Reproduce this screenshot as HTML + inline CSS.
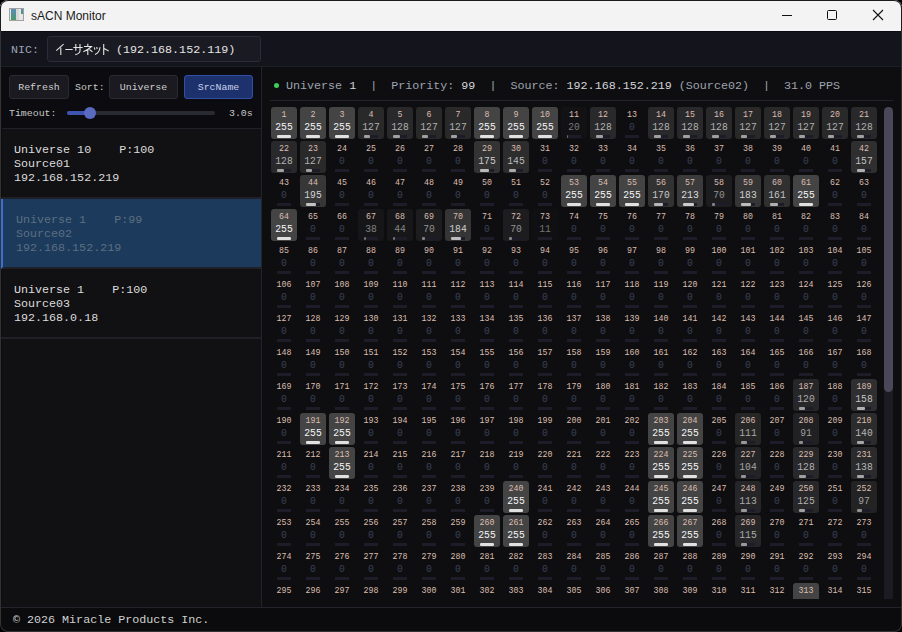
<!DOCTYPE html>
<html><head><meta charset="utf-8">
<style>
*{margin:0;padding:0;box-sizing:border-box}
html,body{width:902px;height:632px;overflow:hidden;background:#000}
body{font-family:"Liberation Mono",monospace;position:relative}
.win{position:absolute;left:0;top:0;width:902px;height:632px;border-radius:8px;overflow:hidden;background:#0e0e11}
.frame{position:absolute;left:0;top:0;width:902px;height:632px;border-radius:8px;border:1px solid #333;border-top-color:#1c1c1c;pointer-events:none}
.fl{position:absolute;top:6px;width:1px;height:25px;background:#1c1c1c}
.title{position:absolute;left:0;top:0;width:902px;height:31px;background:#f3f3f3;font-family:"Liberation Sans",sans-serif;font-size:12px;color:#1a1a1a}
.title .t{position:absolute;left:31px;top:9px}
.nic{position:absolute;left:0;top:31px;width:902px;height:36px;background:#14141c;border-top:1px solid #0a0a10;border-bottom:1px solid #1e1e27}
.nic .lbl{position:absolute;left:11px;top:11px;font-size:11.7px;color:#9aa3b5}
.nic .box{position:absolute;left:47px;top:4px;width:214px;height:26px;background:#1a1a22;border:1px solid #2c2c38;border-radius:3px}
.nic .nt{position:absolute;left:116px;top:11px;font-size:11.7px;color:#e6e6e6}
.left{position:absolute;left:0;top:67px;width:262px;height:540px;background:#111114;border-right:1px solid #23232b}
.btn{position:absolute;top:8px;height:24px;border:1px solid #2a2a33;background:#1a1a20;border-radius:3px;font-size:9.9px;color:#d0d0d0;text-align:center;line-height:23px}
.btn.sel{background:#1d326c;border-color:#3050a8;color:#c8d0ea}
.sort{position:absolute;left:75px;top:15px;font-size:9.9px;color:#c8c8c8}
.tmo{position:absolute;left:9px;top:41px;font-size:9.9px;color:#c8c8c8}
.track{position:absolute;left:67px;top:44px;width:148px;height:4px;border-radius:2px;background:#2a2a33}
.fill{position:absolute;left:67px;top:44px;width:24px;height:4px;border-radius:2px;background:#3d55b0}
.knob{position:absolute;left:84px;top:40px;width:12px;height:12px;border-radius:6px;background:#5a6ac0}
.tval{position:absolute;left:229px;top:41px;font-size:9.9px;color:#c8c8c8}
.sep1{position:absolute;left:0;top:61px;width:261px;height:1px;background:#202028}
.item{position:absolute;left:1px;width:260px;height:70px;font-size:11.7px;line-height:14px;color:#dcdcdc;border-bottom:2px solid #202029}
.item .tx{position:absolute;left:13px;top:14px;white-space:pre}
.item.sel{background:#1b3a5c;color:#5d6f80;border-left:2px solid #3b6fd8}
.item.sel .tx{left:13px}
.right{position:absolute;left:262px;top:67px;width:638px;height:540px;background:#0e0e11}
.status{position:absolute;left:8px;top:0;width:623px;height:34px;padding-left:16px;border-bottom:1px solid #23232b;font-size:11.7px;color:#9da3ad;white-space:pre;line-height:33px}
.status b{color:#d4d4d8;font-weight:normal}
.dot{position:absolute;left:4px;top:16px;width:5px;height:5px;border-radius:3px;background:#3ccf5a}
.grid{position:absolute;left:0;top:35px;width:622px;height:497px;overflow:hidden}
.c{position:absolute;width:26px;height:32px;border-radius:3px}
.c i{position:absolute;left:0;top:3px;width:26px;text-align:center;font-style:normal;font-size:9px;line-height:10px;color:#dcbeb0;transform:scaleX(.92)}
.c s{position:absolute;left:0;top:14px;width:26px;text-align:center;text-decoration:none;font-size:10.5px;line-height:12px;transform:scaleX(.92)}
.c s.b{}
.c u{position:absolute;left:6px;top:28px;width:14px;height:3px;background:#1c1d29}
.c u em{position:absolute;left:0;top:0;height:3px;display:block;border-radius:1px}
.sbt{position:absolute;left:622px;top:40px;width:9px;height:492px;background:#1c1b22;border-radius:4px 4px 0 0}
.sbth{position:absolute;left:622px;top:40px;width:9px;height:285px;background:#4a4858;border-radius:4.5px}
.foot{position:absolute;left:0;top:607px;width:902px;height:24px;background:#0b0b0d;border-top:1px solid #23232b;font-size:11.7px;color:#d0d0d0}
.foot span{position:absolute;left:13px;top:5px}
</style></head><body>
<div class="win">
 <div class="title">
  <svg style="position:absolute;left:9px;top:8px" width="15" height="13" viewBox="0 0 15 13"><defs><linearGradient id="g1" x1="0" y1="0" x2="0" y2="1"><stop offset="0" stop-color="#5a8cb8"/><stop offset="1" stop-color="#4a9a6a"/></linearGradient></defs><rect x="0.5" y="0.5" width="14" height="12" fill="#e6e6e6" stroke="#a0a0a0"/><rect x="2" y="1" width="5" height="11" fill="url(#g1)"/><rect x="7" y="1" width="3" height="11" fill="#d8d8d8"/><rect x="12" y="1" width="2" height="5" fill="url(#g1)"/></svg>
  <span class="t">sACN Monitor</span>
  <div style="position:absolute;left:782px;top:15px;width:10px;height:1px;background:#111"></div>
  <div style="position:absolute;left:827px;top:10px;width:10px;height:10px;border:1px solid #111;border-radius:1.5px"></div>
  <svg style="position:absolute;left:872px;top:9px" width="12" height="12" viewBox="0 0 12 12"><path d="M1 1L11 11M11 1L1 11" stroke="#111" stroke-width="1.1"/></svg>
 </div>
 <div class="nic"><span class="lbl">NIC:</span><div class="box"></div>
  <svg style="position:absolute;left:54px;top:9px" width="60" height="16" viewBox="54 41 60 16" fill="none" stroke="#e4e4e4" stroke-width="1.1" stroke-linecap="butt">
   <path d="M63.6 44.2L56.3 50.7M60.8 47.7V55"/>
   <path d="M65.3 49.5H72.7"/>
   <path d="M73.3 47.5H82.7M75.8 44V50.8M80 44V51Q79.6 53.8 75.3 54.6"/>
   <path d="M87.8 43.8V46.2M84 46.5H91.5Q88 50 83.3 51.7M87.8 49.3V55M89.5 49.5L92.5 51.9"/>
   <path d="M94.3 47.3L94.9 49.6M96.7 47L97.2 49.2M100 47.3Q99.5 52.5 95 54.6"/>
   <path d="M103.7 44V55M104 48.5L108.7 50.9"/>
  </svg>
  <span class="nt">(192.168.152.119)</span></div>
 <div class="left">
  <div style="position:absolute;left:0;top:0;width:261px;height:61px;background:#0c0c10"></div>
  <div class="btn" style="left:9px;width:60px">Refresh</div>
  <span class="sort">Sort:</span>
  <div class="btn" style="left:109px;width:69px">Universe</div>
  <div class="btn sel" style="left:184px;width:69px">SrcName</div>
  <span class="tmo">Timeout:</span>
  <div class="track"></div><div class="fill"></div><div class="knob"></div>
  <span class="tval">3.0s</span>
  <div class="sep1"></div>
  <div style="position:absolute;left:1px;top:0;width:1px;height:540px;background:#0c0c0d"></div>
  <div class="item" style="top:62px"><div class="tx">Universe 10    P:100
Source01
192.168.152.219</div></div>
  <div class="item sel" style="top:132px"><div class="tx">Universe 1    P:99
Source02
192.168.152.219</div></div>
  <div class="item" style="top:202px"><div class="tx">Universe 1    P:100
Source03
192.168.0.18</div></div>
 </div>
 <div class="right">
  <div class="status"><span class="dot"></span><span style="position:relative;top:3px">Universe <b>1</b>  |  Priority: <b>99</b>  |  Source: <b>192.168.152.219</b> (Source02)  |  31.0 PPS</span></div>
  <div class="grid">
<div class="c" style="left:9px;top:5px;background:#444444"><i>1</i><s class="v b" style="color:#f5f5f5">255</s><u><em style="width:14px;background:#e1e1e1"></em></u></div>
<div class="c" style="left:38px;top:5px;background:#444444"><i>2</i><s class="v b" style="color:#f5f5f5">255</s><u><em style="width:14px;background:#e1e1e1"></em></u></div>
<div class="c" style="left:67px;top:5px;background:#444444"><i>3</i><s class="v b" style="color:#f5f5f5">255</s><u><em style="width:14px;background:#e1e1e1"></em></u></div>
<div class="c" style="left:96px;top:5px;background:#29292a"><i>4</i><s class="v" style="color:#b1b1b1">127</s><u><em style="width:6px;background:#a0a0a0"></em></u></div>
<div class="c" style="left:125px;top:5px;background:#29292b"><i>5</i><s class="v" style="color:#b2b2b2">128</s><u><em style="width:7px;background:#a0a0a0"></em></u></div>
<div class="c" style="left:154px;top:5px;background:#29292a"><i>6</i><s class="v" style="color:#b1b1b1">127</s><u><em style="width:6px;background:#a0a0a0"></em></u></div>
<div class="c" style="left:183px;top:5px;background:#29292a"><i>7</i><s class="v" style="color:#b1b1b1">127</s><u><em style="width:6px;background:#a0a0a0"></em></u></div>
<div class="c" style="left:212px;top:5px;background:#444444"><i>8</i><s class="v b" style="color:#f5f5f5">255</s><u><em style="width:14px;background:#e1e1e1"></em></u></div>
<div class="c" style="left:241px;top:5px;background:#444444"><i>9</i><s class="v b" style="color:#f5f5f5">255</s><u><em style="width:14px;background:#e1e1e1"></em></u></div>
<div class="c" style="left:270px;top:5px;background:#444444"><i>10</i><s class="v b" style="color:#f5f5f5">255</s><u><em style="width:14px;background:#e1e1e1"></em></u></div>
<div class="c" style="left:299px;top:5px;background:#121215"><i>11</i><s class="v" style="color:#797979">20</s><u><em style="width:1px;background:#696969"></em></u></div>
<div class="c" style="left:328px;top:5px;background:#29292b"><i>12</i><s class="v" style="color:#b2b2b2">128</s><u><em style="width:7px;background:#a0a0a0"></em></u></div>
<div class="c" style="left:357px;top:5px"><i>13</i><s class="v" style="color:#3a4256">0</s><u><em style="width:0px;background:#5f5f5f"></em></u></div>
<div class="c" style="left:386px;top:5px;background:#29292b"><i>14</i><s class="v" style="color:#b2b2b2">128</s><u><em style="width:7px;background:#a0a0a0"></em></u></div>
<div class="c" style="left:415px;top:5px;background:#29292b"><i>15</i><s class="v" style="color:#b2b2b2">128</s><u><em style="width:7px;background:#a0a0a0"></em></u></div>
<div class="c" style="left:444px;top:5px;background:#29292b"><i>16</i><s class="v" style="color:#b2b2b2">128</s><u><em style="width:7px;background:#a0a0a0"></em></u></div>
<div class="c" style="left:473px;top:5px;background:#29292a"><i>17</i><s class="v" style="color:#b1b1b1">127</s><u><em style="width:6px;background:#a0a0a0"></em></u></div>
<div class="c" style="left:502px;top:5px;background:#29292a"><i>18</i><s class="v" style="color:#b1b1b1">127</s><u><em style="width:6px;background:#a0a0a0"></em></u></div>
<div class="c" style="left:531px;top:5px;background:#29292a"><i>19</i><s class="v" style="color:#b1b1b1">127</s><u><em style="width:6px;background:#a0a0a0"></em></u></div>
<div class="c" style="left:560px;top:5px;background:#29292a"><i>20</i><s class="v" style="color:#b1b1b1">127</s><u><em style="width:6px;background:#a0a0a0"></em></u></div>
<div class="c" style="left:589px;top:5px;background:#29292b"><i>21</i><s class="v" style="color:#b2b2b2">128</s><u><em style="width:7px;background:#a0a0a0"></em></u></div>
<div class="c" style="left:9px;top:39px;background:#29292b"><i>22</i><s class="v" style="color:#b2b2b2">128</s><u><em style="width:7px;background:#a0a0a0"></em></u></div>
<div class="c" style="left:38px;top:39px;background:#29292a"><i>23</i><s class="v" style="color:#b1b1b1">127</s><u><em style="width:6px;background:#a0a0a0"></em></u></div>
<div class="c" style="left:67px;top:39px"><i>24</i><s class="v" style="color:#3a4256">0</s><u><em style="width:0px;background:#5f5f5f"></em></u></div>
<div class="c" style="left:96px;top:39px"><i>25</i><s class="v" style="color:#3a4256">0</s><u><em style="width:0px;background:#5f5f5f"></em></u></div>
<div class="c" style="left:125px;top:39px"><i>26</i><s class="v" style="color:#3a4256">0</s><u><em style="width:0px;background:#5f5f5f"></em></u></div>
<div class="c" style="left:154px;top:39px"><i>27</i><s class="v" style="color:#3a4256">0</s><u><em style="width:0px;background:#5f5f5f"></em></u></div>
<div class="c" style="left:183px;top:39px"><i>28</i><s class="v" style="color:#3a4256">0</s><u><em style="width:0px;background:#5f5f5f"></em></u></div>
<div class="c" style="left:212px;top:39px;background:#333334"><i>29</i><s class="v" style="color:#cbcbcb">175</s><u><em style="width:9px;background:#b8b8b8"></em></u></div>
<div class="c" style="left:241px;top:39px;background:#2d2d2e"><i>30</i><s class="v" style="color:#bbbbbb">145</s><u><em style="width:7px;background:#a9a9a9"></em></u></div>
<div class="c" style="left:270px;top:39px"><i>31</i><s class="v" style="color:#3a4256">0</s><u><em style="width:0px;background:#5f5f5f"></em></u></div>
<div class="c" style="left:299px;top:39px"><i>32</i><s class="v" style="color:#3a4256">0</s><u><em style="width:0px;background:#5f5f5f"></em></u></div>
<div class="c" style="left:328px;top:39px"><i>33</i><s class="v" style="color:#3a4256">0</s><u><em style="width:0px;background:#5f5f5f"></em></u></div>
<div class="c" style="left:357px;top:39px"><i>34</i><s class="v" style="color:#3a4256">0</s><u><em style="width:0px;background:#5f5f5f"></em></u></div>
<div class="c" style="left:386px;top:39px"><i>35</i><s class="v" style="color:#3a4256">0</s><u><em style="width:0px;background:#5f5f5f"></em></u></div>
<div class="c" style="left:415px;top:39px"><i>36</i><s class="v" style="color:#3a4256">0</s><u><em style="width:0px;background:#5f5f5f"></em></u></div>
<div class="c" style="left:444px;top:39px"><i>37</i><s class="v" style="color:#3a4256">0</s><u><em style="width:0px;background:#5f5f5f"></em></u></div>
<div class="c" style="left:473px;top:39px"><i>38</i><s class="v" style="color:#3a4256">0</s><u><em style="width:0px;background:#5f5f5f"></em></u></div>
<div class="c" style="left:502px;top:39px"><i>39</i><s class="v" style="color:#3a4256">0</s><u><em style="width:0px;background:#5f5f5f"></em></u></div>
<div class="c" style="left:531px;top:39px"><i>40</i><s class="v" style="color:#3a4256">0</s><u><em style="width:0px;background:#5f5f5f"></em></u></div>
<div class="c" style="left:560px;top:39px"><i>41</i><s class="v" style="color:#3a4256">0</s><u><em style="width:0px;background:#5f5f5f"></em></u></div>
<div class="c" style="left:589px;top:39px;background:#2f2f30"><i>42</i><s class="v" style="color:#c1c1c1">157</s><u><em style="width:8px;background:#afafaf"></em></u></div>
<div class="c" style="left:9px;top:73px"><i>43</i><s class="v" style="color:#3a4256">0</s><u><em style="width:0px;background:#5f5f5f"></em></u></div>
<div class="c" style="left:38px;top:73px;background:#373738"><i>44</i><s class="v" style="color:#d5d5d5">195</s><u><em style="width:10px;background:#c2c2c2"></em></u></div>
<div class="c" style="left:67px;top:73px"><i>45</i><s class="v" style="color:#3a4256">0</s><u><em style="width:0px;background:#5f5f5f"></em></u></div>
<div class="c" style="left:96px;top:73px"><i>46</i><s class="v" style="color:#3a4256">0</s><u><em style="width:0px;background:#5f5f5f"></em></u></div>
<div class="c" style="left:125px;top:73px"><i>47</i><s class="v" style="color:#3a4256">0</s><u><em style="width:0px;background:#5f5f5f"></em></u></div>
<div class="c" style="left:154px;top:73px"><i>48</i><s class="v" style="color:#3a4256">0</s><u><em style="width:0px;background:#5f5f5f"></em></u></div>
<div class="c" style="left:183px;top:73px"><i>49</i><s class="v" style="color:#3a4256">0</s><u><em style="width:0px;background:#5f5f5f"></em></u></div>
<div class="c" style="left:212px;top:73px"><i>50</i><s class="v" style="color:#3a4256">0</s><u><em style="width:0px;background:#5f5f5f"></em></u></div>
<div class="c" style="left:241px;top:73px"><i>51</i><s class="v" style="color:#3a4256">0</s><u><em style="width:0px;background:#5f5f5f"></em></u></div>
<div class="c" style="left:270px;top:73px"><i>52</i><s class="v" style="color:#3a4256">0</s><u><em style="width:0px;background:#5f5f5f"></em></u></div>
<div class="c" style="left:299px;top:73px;background:#444444"><i>53</i><s class="v b" style="color:#f5f5f5">255</s><u><em style="width:14px;background:#e1e1e1"></em></u></div>
<div class="c" style="left:328px;top:73px;background:#444444"><i>54</i><s class="v b" style="color:#f5f5f5">255</s><u><em style="width:14px;background:#e1e1e1"></em></u></div>
<div class="c" style="left:357px;top:73px;background:#444444"><i>55</i><s class="v b" style="color:#f5f5f5">255</s><u><em style="width:14px;background:#e1e1e1"></em></u></div>
<div class="c" style="left:386px;top:73px;background:#323233"><i>56</i><s class="v" style="color:#c8c8c8">170</s><u><em style="width:9px;background:#b6b6b6"></em></u></div>
<div class="c" style="left:415px;top:73px;background:#3b3b3c"><i>57</i><s class="v" style="color:#dfdfdf">213</s><u><em style="width:11px;background:#cccccc"></em></u></div>
<div class="c" style="left:444px;top:73px;background:#1d1d1f"><i>58</i><s class="v" style="color:#939393">70</s><u><em style="width:3px;background:#838383"></em></u></div>
<div class="c" style="left:473px;top:73px;background:#353536"><i>59</i><s class="v" style="color:#cfcfcf">183</s><u><em style="width:10px;background:#bcbcbc"></em></u></div>
<div class="c" style="left:502px;top:73px;background:#303031"><i>60</i><s class="v" style="color:#c3c3c3">161</s><u><em style="width:8px;background:#b1b1b1"></em></u></div>
<div class="c" style="left:531px;top:73px;background:#444444"><i>61</i><s class="v b" style="color:#f5f5f5">255</s><u><em style="width:14px;background:#e1e1e1"></em></u></div>
<div class="c" style="left:560px;top:73px"><i>62</i><s class="v" style="color:#3a4256">0</s><u><em style="width:0px;background:#5f5f5f"></em></u></div>
<div class="c" style="left:589px;top:73px"><i>63</i><s class="v" style="color:#3a4256">0</s><u><em style="width:0px;background:#5f5f5f"></em></u></div>
<div class="c" style="left:9px;top:107px;background:#444444"><i>64</i><s class="v b" style="color:#f5f5f5">255</s><u><em style="width:14px;background:#e1e1e1"></em></u></div>
<div class="c" style="left:38px;top:107px"><i>65</i><s class="v" style="color:#3a4256">0</s><u><em style="width:0px;background:#5f5f5f"></em></u></div>
<div class="c" style="left:67px;top:107px"><i>66</i><s class="v" style="color:#3a4256">0</s><u><em style="width:0px;background:#5f5f5f"></em></u></div>
<div class="c" style="left:96px;top:107px;background:#161619"><i>67</i><s class="v" style="color:#828282">38</s><u><em style="width:2px;background:#727272"></em></u></div>
<div class="c" style="left:125px;top:107px;background:#17171a"><i>68</i><s class="v" style="color:#858585">44</s><u><em style="width:2px;background:#757575"></em></u></div>
<div class="c" style="left:154px;top:107px;background:#1d1d1f"><i>69</i><s class="v" style="color:#939393">70</s><u><em style="width:3px;background:#838383"></em></u></div>
<div class="c" style="left:183px;top:107px;background:#353536"><i>70</i><s class="v" style="color:#cfcfcf">184</s><u><em style="width:10px;background:#bdbdbd"></em></u></div>
<div class="c" style="left:212px;top:107px"><i>71</i><s class="v" style="color:#3a4256">0</s><u><em style="width:0px;background:#5f5f5f"></em></u></div>
<div class="c" style="left:241px;top:107px;background:#1d1d1f"><i>72</i><s class="v" style="color:#939393">70</s><u><em style="width:3px;background:#838383"></em></u></div>
<div class="c" style="left:270px;top:107px;background:#101013"><i>73</i><s class="v" style="color:#747474">11</s><u><em style="width:0px;background:#656565"></em></u></div>
<div class="c" style="left:299px;top:107px"><i>74</i><s class="v" style="color:#3a4256">0</s><u><em style="width:0px;background:#5f5f5f"></em></u></div>
<div class="c" style="left:328px;top:107px"><i>75</i><s class="v" style="color:#3a4256">0</s><u><em style="width:0px;background:#5f5f5f"></em></u></div>
<div class="c" style="left:357px;top:107px"><i>76</i><s class="v" style="color:#3a4256">0</s><u><em style="width:0px;background:#5f5f5f"></em></u></div>
<div class="c" style="left:386px;top:107px"><i>77</i><s class="v" style="color:#3a4256">0</s><u><em style="width:0px;background:#5f5f5f"></em></u></div>
<div class="c" style="left:415px;top:107px"><i>78</i><s class="v" style="color:#3a4256">0</s><u><em style="width:0px;background:#5f5f5f"></em></u></div>
<div class="c" style="left:444px;top:107px"><i>79</i><s class="v" style="color:#3a4256">0</s><u><em style="width:0px;background:#5f5f5f"></em></u></div>
<div class="c" style="left:473px;top:107px"><i>80</i><s class="v" style="color:#3a4256">0</s><u><em style="width:0px;background:#5f5f5f"></em></u></div>
<div class="c" style="left:502px;top:107px"><i>81</i><s class="v" style="color:#3a4256">0</s><u><em style="width:0px;background:#5f5f5f"></em></u></div>
<div class="c" style="left:531px;top:107px"><i>82</i><s class="v" style="color:#3a4256">0</s><u><em style="width:0px;background:#5f5f5f"></em></u></div>
<div class="c" style="left:560px;top:107px"><i>83</i><s class="v" style="color:#3a4256">0</s><u><em style="width:0px;background:#5f5f5f"></em></u></div>
<div class="c" style="left:589px;top:107px"><i>84</i><s class="v" style="color:#3a4256">0</s><u><em style="width:0px;background:#5f5f5f"></em></u></div>
<div class="c" style="left:9px;top:141px"><i>85</i><s class="v" style="color:#3a4256">0</s><u><em style="width:0px;background:#5f5f5f"></em></u></div>
<div class="c" style="left:38px;top:141px"><i>86</i><s class="v" style="color:#3a4256">0</s><u><em style="width:0px;background:#5f5f5f"></em></u></div>
<div class="c" style="left:67px;top:141px"><i>87</i><s class="v" style="color:#3a4256">0</s><u><em style="width:0px;background:#5f5f5f"></em></u></div>
<div class="c" style="left:96px;top:141px"><i>88</i><s class="v" style="color:#3a4256">0</s><u><em style="width:0px;background:#5f5f5f"></em></u></div>
<div class="c" style="left:125px;top:141px"><i>89</i><s class="v" style="color:#3a4256">0</s><u><em style="width:0px;background:#5f5f5f"></em></u></div>
<div class="c" style="left:154px;top:141px"><i>90</i><s class="v" style="color:#3a4256">0</s><u><em style="width:0px;background:#5f5f5f"></em></u></div>
<div class="c" style="left:183px;top:141px"><i>91</i><s class="v" style="color:#3a4256">0</s><u><em style="width:0px;background:#5f5f5f"></em></u></div>
<div class="c" style="left:212px;top:141px"><i>92</i><s class="v" style="color:#3a4256">0</s><u><em style="width:0px;background:#5f5f5f"></em></u></div>
<div class="c" style="left:241px;top:141px"><i>93</i><s class="v" style="color:#3a4256">0</s><u><em style="width:0px;background:#5f5f5f"></em></u></div>
<div class="c" style="left:270px;top:141px"><i>94</i><s class="v" style="color:#3a4256">0</s><u><em style="width:0px;background:#5f5f5f"></em></u></div>
<div class="c" style="left:299px;top:141px"><i>95</i><s class="v" style="color:#3a4256">0</s><u><em style="width:0px;background:#5f5f5f"></em></u></div>
<div class="c" style="left:328px;top:141px"><i>96</i><s class="v" style="color:#3a4256">0</s><u><em style="width:0px;background:#5f5f5f"></em></u></div>
<div class="c" style="left:357px;top:141px"><i>97</i><s class="v" style="color:#3a4256">0</s><u><em style="width:0px;background:#5f5f5f"></em></u></div>
<div class="c" style="left:386px;top:141px"><i>98</i><s class="v" style="color:#3a4256">0</s><u><em style="width:0px;background:#5f5f5f"></em></u></div>
<div class="c" style="left:415px;top:141px"><i>99</i><s class="v" style="color:#3a4256">0</s><u><em style="width:0px;background:#5f5f5f"></em></u></div>
<div class="c" style="left:444px;top:141px"><i>100</i><s class="v" style="color:#3a4256">0</s><u><em style="width:0px;background:#5f5f5f"></em></u></div>
<div class="c" style="left:473px;top:141px"><i>101</i><s class="v" style="color:#3a4256">0</s><u><em style="width:0px;background:#5f5f5f"></em></u></div>
<div class="c" style="left:502px;top:141px"><i>102</i><s class="v" style="color:#3a4256">0</s><u><em style="width:0px;background:#5f5f5f"></em></u></div>
<div class="c" style="left:531px;top:141px"><i>103</i><s class="v" style="color:#3a4256">0</s><u><em style="width:0px;background:#5f5f5f"></em></u></div>
<div class="c" style="left:560px;top:141px"><i>104</i><s class="v" style="color:#3a4256">0</s><u><em style="width:0px;background:#5f5f5f"></em></u></div>
<div class="c" style="left:589px;top:141px"><i>105</i><s class="v" style="color:#3a4256">0</s><u><em style="width:0px;background:#5f5f5f"></em></u></div>
<div class="c" style="left:9px;top:175px"><i>106</i><s class="v" style="color:#3a4256">0</s><u><em style="width:0px;background:#5f5f5f"></em></u></div>
<div class="c" style="left:38px;top:175px"><i>107</i><s class="v" style="color:#3a4256">0</s><u><em style="width:0px;background:#5f5f5f"></em></u></div>
<div class="c" style="left:67px;top:175px"><i>108</i><s class="v" style="color:#3a4256">0</s><u><em style="width:0px;background:#5f5f5f"></em></u></div>
<div class="c" style="left:96px;top:175px"><i>109</i><s class="v" style="color:#3a4256">0</s><u><em style="width:0px;background:#5f5f5f"></em></u></div>
<div class="c" style="left:125px;top:175px"><i>110</i><s class="v" style="color:#3a4256">0</s><u><em style="width:0px;background:#5f5f5f"></em></u></div>
<div class="c" style="left:154px;top:175px"><i>111</i><s class="v" style="color:#3a4256">0</s><u><em style="width:0px;background:#5f5f5f"></em></u></div>
<div class="c" style="left:183px;top:175px"><i>112</i><s class="v" style="color:#3a4256">0</s><u><em style="width:0px;background:#5f5f5f"></em></u></div>
<div class="c" style="left:212px;top:175px"><i>113</i><s class="v" style="color:#3a4256">0</s><u><em style="width:0px;background:#5f5f5f"></em></u></div>
<div class="c" style="left:241px;top:175px"><i>114</i><s class="v" style="color:#3a4256">0</s><u><em style="width:0px;background:#5f5f5f"></em></u></div>
<div class="c" style="left:270px;top:175px"><i>115</i><s class="v" style="color:#3a4256">0</s><u><em style="width:0px;background:#5f5f5f"></em></u></div>
<div class="c" style="left:299px;top:175px"><i>116</i><s class="v" style="color:#3a4256">0</s><u><em style="width:0px;background:#5f5f5f"></em></u></div>
<div class="c" style="left:328px;top:175px"><i>117</i><s class="v" style="color:#3a4256">0</s><u><em style="width:0px;background:#5f5f5f"></em></u></div>
<div class="c" style="left:357px;top:175px"><i>118</i><s class="v" style="color:#3a4256">0</s><u><em style="width:0px;background:#5f5f5f"></em></u></div>
<div class="c" style="left:386px;top:175px"><i>119</i><s class="v" style="color:#3a4256">0</s><u><em style="width:0px;background:#5f5f5f"></em></u></div>
<div class="c" style="left:415px;top:175px"><i>120</i><s class="v" style="color:#3a4256">0</s><u><em style="width:0px;background:#5f5f5f"></em></u></div>
<div class="c" style="left:444px;top:175px"><i>121</i><s class="v" style="color:#3a4256">0</s><u><em style="width:0px;background:#5f5f5f"></em></u></div>
<div class="c" style="left:473px;top:175px"><i>122</i><s class="v" style="color:#3a4256">0</s><u><em style="width:0px;background:#5f5f5f"></em></u></div>
<div class="c" style="left:502px;top:175px"><i>123</i><s class="v" style="color:#3a4256">0</s><u><em style="width:0px;background:#5f5f5f"></em></u></div>
<div class="c" style="left:531px;top:175px"><i>124</i><s class="v" style="color:#3a4256">0</s><u><em style="width:0px;background:#5f5f5f"></em></u></div>
<div class="c" style="left:560px;top:175px"><i>125</i><s class="v" style="color:#3a4256">0</s><u><em style="width:0px;background:#5f5f5f"></em></u></div>
<div class="c" style="left:589px;top:175px"><i>126</i><s class="v" style="color:#3a4256">0</s><u><em style="width:0px;background:#5f5f5f"></em></u></div>
<div class="c" style="left:9px;top:209px"><i>127</i><s class="v" style="color:#3a4256">0</s><u><em style="width:0px;background:#5f5f5f"></em></u></div>
<div class="c" style="left:38px;top:209px"><i>128</i><s class="v" style="color:#3a4256">0</s><u><em style="width:0px;background:#5f5f5f"></em></u></div>
<div class="c" style="left:67px;top:209px"><i>129</i><s class="v" style="color:#3a4256">0</s><u><em style="width:0px;background:#5f5f5f"></em></u></div>
<div class="c" style="left:96px;top:209px"><i>130</i><s class="v" style="color:#3a4256">0</s><u><em style="width:0px;background:#5f5f5f"></em></u></div>
<div class="c" style="left:125px;top:209px"><i>131</i><s class="v" style="color:#3a4256">0</s><u><em style="width:0px;background:#5f5f5f"></em></u></div>
<div class="c" style="left:154px;top:209px"><i>132</i><s class="v" style="color:#3a4256">0</s><u><em style="width:0px;background:#5f5f5f"></em></u></div>
<div class="c" style="left:183px;top:209px"><i>133</i><s class="v" style="color:#3a4256">0</s><u><em style="width:0px;background:#5f5f5f"></em></u></div>
<div class="c" style="left:212px;top:209px"><i>134</i><s class="v" style="color:#3a4256">0</s><u><em style="width:0px;background:#5f5f5f"></em></u></div>
<div class="c" style="left:241px;top:209px"><i>135</i><s class="v" style="color:#3a4256">0</s><u><em style="width:0px;background:#5f5f5f"></em></u></div>
<div class="c" style="left:270px;top:209px"><i>136</i><s class="v" style="color:#3a4256">0</s><u><em style="width:0px;background:#5f5f5f"></em></u></div>
<div class="c" style="left:299px;top:209px"><i>137</i><s class="v" style="color:#3a4256">0</s><u><em style="width:0px;background:#5f5f5f"></em></u></div>
<div class="c" style="left:328px;top:209px"><i>138</i><s class="v" style="color:#3a4256">0</s><u><em style="width:0px;background:#5f5f5f"></em></u></div>
<div class="c" style="left:357px;top:209px"><i>139</i><s class="v" style="color:#3a4256">0</s><u><em style="width:0px;background:#5f5f5f"></em></u></div>
<div class="c" style="left:386px;top:209px"><i>140</i><s class="v" style="color:#3a4256">0</s><u><em style="width:0px;background:#5f5f5f"></em></u></div>
<div class="c" style="left:415px;top:209px"><i>141</i><s class="v" style="color:#3a4256">0</s><u><em style="width:0px;background:#5f5f5f"></em></u></div>
<div class="c" style="left:444px;top:209px"><i>142</i><s class="v" style="color:#3a4256">0</s><u><em style="width:0px;background:#5f5f5f"></em></u></div>
<div class="c" style="left:473px;top:209px"><i>143</i><s class="v" style="color:#3a4256">0</s><u><em style="width:0px;background:#5f5f5f"></em></u></div>
<div class="c" style="left:502px;top:209px"><i>144</i><s class="v" style="color:#3a4256">0</s><u><em style="width:0px;background:#5f5f5f"></em></u></div>
<div class="c" style="left:531px;top:209px"><i>145</i><s class="v" style="color:#3a4256">0</s><u><em style="width:0px;background:#5f5f5f"></em></u></div>
<div class="c" style="left:560px;top:209px"><i>146</i><s class="v" style="color:#3a4256">0</s><u><em style="width:0px;background:#5f5f5f"></em></u></div>
<div class="c" style="left:589px;top:209px"><i>147</i><s class="v" style="color:#3a4256">0</s><u><em style="width:0px;background:#5f5f5f"></em></u></div>
<div class="c" style="left:9px;top:243px"><i>148</i><s class="v" style="color:#3a4256">0</s><u><em style="width:0px;background:#5f5f5f"></em></u></div>
<div class="c" style="left:38px;top:243px"><i>149</i><s class="v" style="color:#3a4256">0</s><u><em style="width:0px;background:#5f5f5f"></em></u></div>
<div class="c" style="left:67px;top:243px"><i>150</i><s class="v" style="color:#3a4256">0</s><u><em style="width:0px;background:#5f5f5f"></em></u></div>
<div class="c" style="left:96px;top:243px"><i>151</i><s class="v" style="color:#3a4256">0</s><u><em style="width:0px;background:#5f5f5f"></em></u></div>
<div class="c" style="left:125px;top:243px"><i>152</i><s class="v" style="color:#3a4256">0</s><u><em style="width:0px;background:#5f5f5f"></em></u></div>
<div class="c" style="left:154px;top:243px"><i>153</i><s class="v" style="color:#3a4256">0</s><u><em style="width:0px;background:#5f5f5f"></em></u></div>
<div class="c" style="left:183px;top:243px"><i>154</i><s class="v" style="color:#3a4256">0</s><u><em style="width:0px;background:#5f5f5f"></em></u></div>
<div class="c" style="left:212px;top:243px"><i>155</i><s class="v" style="color:#3a4256">0</s><u><em style="width:0px;background:#5f5f5f"></em></u></div>
<div class="c" style="left:241px;top:243px"><i>156</i><s class="v" style="color:#3a4256">0</s><u><em style="width:0px;background:#5f5f5f"></em></u></div>
<div class="c" style="left:270px;top:243px"><i>157</i><s class="v" style="color:#3a4256">0</s><u><em style="width:0px;background:#5f5f5f"></em></u></div>
<div class="c" style="left:299px;top:243px"><i>158</i><s class="v" style="color:#3a4256">0</s><u><em style="width:0px;background:#5f5f5f"></em></u></div>
<div class="c" style="left:328px;top:243px"><i>159</i><s class="v" style="color:#3a4256">0</s><u><em style="width:0px;background:#5f5f5f"></em></u></div>
<div class="c" style="left:357px;top:243px"><i>160</i><s class="v" style="color:#3a4256">0</s><u><em style="width:0px;background:#5f5f5f"></em></u></div>
<div class="c" style="left:386px;top:243px"><i>161</i><s class="v" style="color:#3a4256">0</s><u><em style="width:0px;background:#5f5f5f"></em></u></div>
<div class="c" style="left:415px;top:243px"><i>162</i><s class="v" style="color:#3a4256">0</s><u><em style="width:0px;background:#5f5f5f"></em></u></div>
<div class="c" style="left:444px;top:243px"><i>163</i><s class="v" style="color:#3a4256">0</s><u><em style="width:0px;background:#5f5f5f"></em></u></div>
<div class="c" style="left:473px;top:243px"><i>164</i><s class="v" style="color:#3a4256">0</s><u><em style="width:0px;background:#5f5f5f"></em></u></div>
<div class="c" style="left:502px;top:243px"><i>165</i><s class="v" style="color:#3a4256">0</s><u><em style="width:0px;background:#5f5f5f"></em></u></div>
<div class="c" style="left:531px;top:243px"><i>166</i><s class="v" style="color:#3a4256">0</s><u><em style="width:0px;background:#5f5f5f"></em></u></div>
<div class="c" style="left:560px;top:243px"><i>167</i><s class="v" style="color:#3a4256">0</s><u><em style="width:0px;background:#5f5f5f"></em></u></div>
<div class="c" style="left:589px;top:243px"><i>168</i><s class="v" style="color:#3a4256">0</s><u><em style="width:0px;background:#5f5f5f"></em></u></div>
<div class="c" style="left:9px;top:277px"><i>169</i><s class="v" style="color:#3a4256">0</s><u><em style="width:0px;background:#5f5f5f"></em></u></div>
<div class="c" style="left:38px;top:277px"><i>170</i><s class="v" style="color:#3a4256">0</s><u><em style="width:0px;background:#5f5f5f"></em></u></div>
<div class="c" style="left:67px;top:277px"><i>171</i><s class="v" style="color:#3a4256">0</s><u><em style="width:0px;background:#5f5f5f"></em></u></div>
<div class="c" style="left:96px;top:277px"><i>172</i><s class="v" style="color:#3a4256">0</s><u><em style="width:0px;background:#5f5f5f"></em></u></div>
<div class="c" style="left:125px;top:277px"><i>173</i><s class="v" style="color:#3a4256">0</s><u><em style="width:0px;background:#5f5f5f"></em></u></div>
<div class="c" style="left:154px;top:277px"><i>174</i><s class="v" style="color:#3a4256">0</s><u><em style="width:0px;background:#5f5f5f"></em></u></div>
<div class="c" style="left:183px;top:277px"><i>175</i><s class="v" style="color:#3a4256">0</s><u><em style="width:0px;background:#5f5f5f"></em></u></div>
<div class="c" style="left:212px;top:277px"><i>176</i><s class="v" style="color:#3a4256">0</s><u><em style="width:0px;background:#5f5f5f"></em></u></div>
<div class="c" style="left:241px;top:277px"><i>177</i><s class="v" style="color:#3a4256">0</s><u><em style="width:0px;background:#5f5f5f"></em></u></div>
<div class="c" style="left:270px;top:277px"><i>178</i><s class="v" style="color:#3a4256">0</s><u><em style="width:0px;background:#5f5f5f"></em></u></div>
<div class="c" style="left:299px;top:277px"><i>179</i><s class="v" style="color:#3a4256">0</s><u><em style="width:0px;background:#5f5f5f"></em></u></div>
<div class="c" style="left:328px;top:277px"><i>180</i><s class="v" style="color:#3a4256">0</s><u><em style="width:0px;background:#5f5f5f"></em></u></div>
<div class="c" style="left:357px;top:277px"><i>181</i><s class="v" style="color:#3a4256">0</s><u><em style="width:0px;background:#5f5f5f"></em></u></div>
<div class="c" style="left:386px;top:277px"><i>182</i><s class="v" style="color:#3a4256">0</s><u><em style="width:0px;background:#5f5f5f"></em></u></div>
<div class="c" style="left:415px;top:277px"><i>183</i><s class="v" style="color:#3a4256">0</s><u><em style="width:0px;background:#5f5f5f"></em></u></div>
<div class="c" style="left:444px;top:277px"><i>184</i><s class="v" style="color:#3a4256">0</s><u><em style="width:0px;background:#5f5f5f"></em></u></div>
<div class="c" style="left:473px;top:277px"><i>185</i><s class="v" style="color:#3a4256">0</s><u><em style="width:0px;background:#5f5f5f"></em></u></div>
<div class="c" style="left:502px;top:277px"><i>186</i><s class="v" style="color:#3a4256">0</s><u><em style="width:0px;background:#5f5f5f"></em></u></div>
<div class="c" style="left:531px;top:277px;background:#272729"><i>187</i><s class="v" style="color:#aeaeae">120</s><u><em style="width:6px;background:#9c9c9c"></em></u></div>
<div class="c" style="left:560px;top:277px"><i>188</i><s class="v" style="color:#3a4256">0</s><u><em style="width:0px;background:#5f5f5f"></em></u></div>
<div class="c" style="left:589px;top:277px;background:#2f2f31"><i>189</i><s class="v" style="color:#c2c2c2">158</s><u><em style="width:8px;background:#b0b0b0"></em></u></div>
<div class="c" style="left:9px;top:311px"><i>190</i><s class="v" style="color:#3a4256">0</s><u><em style="width:0px;background:#5f5f5f"></em></u></div>
<div class="c" style="left:38px;top:311px;background:#444444"><i>191</i><s class="v b" style="color:#f5f5f5">255</s><u><em style="width:14px;background:#e1e1e1"></em></u></div>
<div class="c" style="left:67px;top:311px;background:#444444"><i>192</i><s class="v b" style="color:#f5f5f5">255</s><u><em style="width:14px;background:#e1e1e1"></em></u></div>
<div class="c" style="left:96px;top:311px"><i>193</i><s class="v" style="color:#3a4256">0</s><u><em style="width:0px;background:#5f5f5f"></em></u></div>
<div class="c" style="left:125px;top:311px"><i>194</i><s class="v" style="color:#3a4256">0</s><u><em style="width:0px;background:#5f5f5f"></em></u></div>
<div class="c" style="left:154px;top:311px"><i>195</i><s class="v" style="color:#3a4256">0</s><u><em style="width:0px;background:#5f5f5f"></em></u></div>
<div class="c" style="left:183px;top:311px"><i>196</i><s class="v" style="color:#3a4256">0</s><u><em style="width:0px;background:#5f5f5f"></em></u></div>
<div class="c" style="left:212px;top:311px"><i>197</i><s class="v" style="color:#3a4256">0</s><u><em style="width:0px;background:#5f5f5f"></em></u></div>
<div class="c" style="left:241px;top:311px"><i>198</i><s class="v" style="color:#3a4256">0</s><u><em style="width:0px;background:#5f5f5f"></em></u></div>
<div class="c" style="left:270px;top:311px"><i>199</i><s class="v" style="color:#3a4256">0</s><u><em style="width:0px;background:#5f5f5f"></em></u></div>
<div class="c" style="left:299px;top:311px"><i>200</i><s class="v" style="color:#3a4256">0</s><u><em style="width:0px;background:#5f5f5f"></em></u></div>
<div class="c" style="left:328px;top:311px"><i>201</i><s class="v" style="color:#3a4256">0</s><u><em style="width:0px;background:#5f5f5f"></em></u></div>
<div class="c" style="left:357px;top:311px"><i>202</i><s class="v" style="color:#3a4256">0</s><u><em style="width:0px;background:#5f5f5f"></em></u></div>
<div class="c" style="left:386px;top:311px;background:#444444"><i>203</i><s class="v b" style="color:#f5f5f5">255</s><u><em style="width:14px;background:#e1e1e1"></em></u></div>
<div class="c" style="left:415px;top:311px;background:#444444"><i>204</i><s class="v b" style="color:#f5f5f5">255</s><u><em style="width:14px;background:#e1e1e1"></em></u></div>
<div class="c" style="left:444px;top:311px"><i>205</i><s class="v" style="color:#3a4256">0</s><u><em style="width:0px;background:#5f5f5f"></em></u></div>
<div class="c" style="left:473px;top:311px;background:#262627"><i>206</i><s class="v" style="color:#a9a9a9">111</s><u><em style="width:6px;background:#989898"></em></u></div>
<div class="c" style="left:502px;top:311px"><i>207</i><s class="v" style="color:#3a4256">0</s><u><em style="width:0px;background:#5f5f5f"></em></u></div>
<div class="c" style="left:531px;top:311px;background:#212123"><i>208</i><s class="v" style="color:#9e9e9e">91</s><u><em style="width:4px;background:#8d8d8d"></em></u></div>
<div class="c" style="left:560px;top:311px"><i>209</i><s class="v" style="color:#3a4256">0</s><u><em style="width:0px;background:#5f5f5f"></em></u></div>
<div class="c" style="left:589px;top:311px;background:#2c2c2d"><i>210</i><s class="v" style="color:#b8b8b8">140</s><u><em style="width:7px;background:#a6a6a6"></em></u></div>
<div class="c" style="left:9px;top:345px"><i>211</i><s class="v" style="color:#3a4256">0</s><u><em style="width:0px;background:#5f5f5f"></em></u></div>
<div class="c" style="left:38px;top:345px"><i>212</i><s class="v" style="color:#3a4256">0</s><u><em style="width:0px;background:#5f5f5f"></em></u></div>
<div class="c" style="left:67px;top:345px;background:#444444"><i>213</i><s class="v b" style="color:#f5f5f5">255</s><u><em style="width:14px;background:#e1e1e1"></em></u></div>
<div class="c" style="left:96px;top:345px"><i>214</i><s class="v" style="color:#3a4256">0</s><u><em style="width:0px;background:#5f5f5f"></em></u></div>
<div class="c" style="left:125px;top:345px"><i>215</i><s class="v" style="color:#3a4256">0</s><u><em style="width:0px;background:#5f5f5f"></em></u></div>
<div class="c" style="left:154px;top:345px"><i>216</i><s class="v" style="color:#3a4256">0</s><u><em style="width:0px;background:#5f5f5f"></em></u></div>
<div class="c" style="left:183px;top:345px"><i>217</i><s class="v" style="color:#3a4256">0</s><u><em style="width:0px;background:#5f5f5f"></em></u></div>
<div class="c" style="left:212px;top:345px"><i>218</i><s class="v" style="color:#3a4256">0</s><u><em style="width:0px;background:#5f5f5f"></em></u></div>
<div class="c" style="left:241px;top:345px"><i>219</i><s class="v" style="color:#3a4256">0</s><u><em style="width:0px;background:#5f5f5f"></em></u></div>
<div class="c" style="left:270px;top:345px"><i>220</i><s class="v" style="color:#3a4256">0</s><u><em style="width:0px;background:#5f5f5f"></em></u></div>
<div class="c" style="left:299px;top:345px"><i>221</i><s class="v" style="color:#3a4256">0</s><u><em style="width:0px;background:#5f5f5f"></em></u></div>
<div class="c" style="left:328px;top:345px"><i>222</i><s class="v" style="color:#3a4256">0</s><u><em style="width:0px;background:#5f5f5f"></em></u></div>
<div class="c" style="left:357px;top:345px"><i>223</i><s class="v" style="color:#3a4256">0</s><u><em style="width:0px;background:#5f5f5f"></em></u></div>
<div class="c" style="left:386px;top:345px;background:#444444"><i>224</i><s class="v b" style="color:#f5f5f5">255</s><u><em style="width:14px;background:#e1e1e1"></em></u></div>
<div class="c" style="left:415px;top:345px;background:#444444"><i>225</i><s class="v b" style="color:#f5f5f5">255</s><u><em style="width:14px;background:#e1e1e1"></em></u></div>
<div class="c" style="left:444px;top:345px"><i>226</i><s class="v" style="color:#3a4256">0</s><u><em style="width:0px;background:#5f5f5f"></em></u></div>
<div class="c" style="left:473px;top:345px;background:#242426"><i>227</i><s class="v" style="color:#a5a5a5">104</s><u><em style="width:5px;background:#949494"></em></u></div>
<div class="c" style="left:502px;top:345px"><i>228</i><s class="v" style="color:#3a4256">0</s><u><em style="width:0px;background:#5f5f5f"></em></u></div>
<div class="c" style="left:531px;top:345px;background:#29292b"><i>229</i><s class="v" style="color:#b2b2b2">128</s><u><em style="width:7px;background:#a0a0a0"></em></u></div>
<div class="c" style="left:560px;top:345px"><i>230</i><s class="v" style="color:#3a4256">0</s><u><em style="width:0px;background:#5f5f5f"></em></u></div>
<div class="c" style="left:589px;top:345px;background:#2b2b2d"><i>231</i><s class="v" style="color:#b7b7b7">138</s><u><em style="width:7px;background:#a5a5a5"></em></u></div>
<div class="c" style="left:9px;top:379px"><i>232</i><s class="v" style="color:#3a4256">0</s><u><em style="width:0px;background:#5f5f5f"></em></u></div>
<div class="c" style="left:38px;top:379px"><i>233</i><s class="v" style="color:#3a4256">0</s><u><em style="width:0px;background:#5f5f5f"></em></u></div>
<div class="c" style="left:67px;top:379px"><i>234</i><s class="v" style="color:#3a4256">0</s><u><em style="width:0px;background:#5f5f5f"></em></u></div>
<div class="c" style="left:96px;top:379px"><i>235</i><s class="v" style="color:#3a4256">0</s><u><em style="width:0px;background:#5f5f5f"></em></u></div>
<div class="c" style="left:125px;top:379px"><i>236</i><s class="v" style="color:#3a4256">0</s><u><em style="width:0px;background:#5f5f5f"></em></u></div>
<div class="c" style="left:154px;top:379px"><i>237</i><s class="v" style="color:#3a4256">0</s><u><em style="width:0px;background:#5f5f5f"></em></u></div>
<div class="c" style="left:183px;top:379px"><i>238</i><s class="v" style="color:#3a4256">0</s><u><em style="width:0px;background:#5f5f5f"></em></u></div>
<div class="c" style="left:212px;top:379px"><i>239</i><s class="v" style="color:#3a4256">0</s><u><em style="width:0px;background:#5f5f5f"></em></u></div>
<div class="c" style="left:241px;top:379px;background:#444444"><i>240</i><s class="v b" style="color:#f5f5f5">255</s><u><em style="width:14px;background:#e1e1e1"></em></u></div>
<div class="c" style="left:270px;top:379px"><i>241</i><s class="v" style="color:#3a4256">0</s><u><em style="width:0px;background:#5f5f5f"></em></u></div>
<div class="c" style="left:299px;top:379px"><i>242</i><s class="v" style="color:#3a4256">0</s><u><em style="width:0px;background:#5f5f5f"></em></u></div>
<div class="c" style="left:328px;top:379px"><i>243</i><s class="v" style="color:#3a4256">0</s><u><em style="width:0px;background:#5f5f5f"></em></u></div>
<div class="c" style="left:357px;top:379px"><i>244</i><s class="v" style="color:#3a4256">0</s><u><em style="width:0px;background:#5f5f5f"></em></u></div>
<div class="c" style="left:386px;top:379px;background:#444444"><i>245</i><s class="v b" style="color:#f5f5f5">255</s><u><em style="width:14px;background:#e1e1e1"></em></u></div>
<div class="c" style="left:415px;top:379px;background:#444444"><i>246</i><s class="v b" style="color:#f5f5f5">255</s><u><em style="width:14px;background:#e1e1e1"></em></u></div>
<div class="c" style="left:444px;top:379px"><i>247</i><s class="v" style="color:#3a4256">0</s><u><em style="width:0px;background:#5f5f5f"></em></u></div>
<div class="c" style="left:473px;top:379px;background:#262628"><i>248</i><s class="v" style="color:#aaaaaa">113</s><u><em style="width:6px;background:#999999"></em></u></div>
<div class="c" style="left:502px;top:379px"><i>249</i><s class="v" style="color:#3a4256">0</s><u><em style="width:0px;background:#5f5f5f"></em></u></div>
<div class="c" style="left:531px;top:379px;background:#28282a"><i>250</i><s class="v" style="color:#b0b0b0">125</s><u><em style="width:6px;background:#9f9f9f"></em></u></div>
<div class="c" style="left:560px;top:379px"><i>251</i><s class="v" style="color:#3a4256">0</s><u><em style="width:0px;background:#5f5f5f"></em></u></div>
<div class="c" style="left:589px;top:379px;background:#232324"><i>252</i><s class="v" style="color:#a1a1a1">97</s><u><em style="width:5px;background:#909090"></em></u></div>
<div class="c" style="left:9px;top:413px"><i>253</i><s class="v" style="color:#3a4256">0</s><u><em style="width:0px;background:#5f5f5f"></em></u></div>
<div class="c" style="left:38px;top:413px"><i>254</i><s class="v" style="color:#3a4256">0</s><u><em style="width:0px;background:#5f5f5f"></em></u></div>
<div class="c" style="left:67px;top:413px"><i>255</i><s class="v" style="color:#3a4256">0</s><u><em style="width:0px;background:#5f5f5f"></em></u></div>
<div class="c" style="left:96px;top:413px"><i>256</i><s class="v" style="color:#3a4256">0</s><u><em style="width:0px;background:#5f5f5f"></em></u></div>
<div class="c" style="left:125px;top:413px"><i>257</i><s class="v" style="color:#3a4256">0</s><u><em style="width:0px;background:#5f5f5f"></em></u></div>
<div class="c" style="left:154px;top:413px"><i>258</i><s class="v" style="color:#3a4256">0</s><u><em style="width:0px;background:#5f5f5f"></em></u></div>
<div class="c" style="left:183px;top:413px"><i>259</i><s class="v" style="color:#3a4256">0</s><u><em style="width:0px;background:#5f5f5f"></em></u></div>
<div class="c" style="left:212px;top:413px;background:#444444"><i>260</i><s class="v b" style="color:#f5f5f5">255</s><u><em style="width:14px;background:#e1e1e1"></em></u></div>
<div class="c" style="left:241px;top:413px;background:#444444"><i>261</i><s class="v b" style="color:#f5f5f5">255</s><u><em style="width:14px;background:#e1e1e1"></em></u></div>
<div class="c" style="left:270px;top:413px"><i>262</i><s class="v" style="color:#3a4256">0</s><u><em style="width:0px;background:#5f5f5f"></em></u></div>
<div class="c" style="left:299px;top:413px"><i>263</i><s class="v" style="color:#3a4256">0</s><u><em style="width:0px;background:#5f5f5f"></em></u></div>
<div class="c" style="left:328px;top:413px"><i>264</i><s class="v" style="color:#3a4256">0</s><u><em style="width:0px;background:#5f5f5f"></em></u></div>
<div class="c" style="left:357px;top:413px"><i>265</i><s class="v" style="color:#3a4256">0</s><u><em style="width:0px;background:#5f5f5f"></em></u></div>
<div class="c" style="left:386px;top:413px;background:#444444"><i>266</i><s class="v b" style="color:#f5f5f5">255</s><u><em style="width:14px;background:#e1e1e1"></em></u></div>
<div class="c" style="left:415px;top:413px;background:#444444"><i>267</i><s class="v b" style="color:#f5f5f5">255</s><u><em style="width:14px;background:#e1e1e1"></em></u></div>
<div class="c" style="left:444px;top:413px"><i>268</i><s class="v" style="color:#3a4256">0</s><u><em style="width:0px;background:#5f5f5f"></em></u></div>
<div class="c" style="left:473px;top:413px;background:#262628"><i>269</i><s class="v" style="color:#ababab">115</s><u><em style="width:6px;background:#9a9a9a"></em></u></div>
<div class="c" style="left:502px;top:413px"><i>270</i><s class="v" style="color:#3a4256">0</s><u><em style="width:0px;background:#5f5f5f"></em></u></div>
<div class="c" style="left:531px;top:413px"><i>271</i><s class="v" style="color:#3a4256">0</s><u><em style="width:0px;background:#5f5f5f"></em></u></div>
<div class="c" style="left:560px;top:413px"><i>272</i><s class="v" style="color:#3a4256">0</s><u><em style="width:0px;background:#5f5f5f"></em></u></div>
<div class="c" style="left:589px;top:413px"><i>273</i><s class="v" style="color:#3a4256">0</s><u><em style="width:0px;background:#5f5f5f"></em></u></div>
<div class="c" style="left:9px;top:447px"><i>274</i><s class="v" style="color:#3a4256">0</s><u><em style="width:0px;background:#5f5f5f"></em></u></div>
<div class="c" style="left:38px;top:447px"><i>275</i><s class="v" style="color:#3a4256">0</s><u><em style="width:0px;background:#5f5f5f"></em></u></div>
<div class="c" style="left:67px;top:447px"><i>276</i><s class="v" style="color:#3a4256">0</s><u><em style="width:0px;background:#5f5f5f"></em></u></div>
<div class="c" style="left:96px;top:447px"><i>277</i><s class="v" style="color:#3a4256">0</s><u><em style="width:0px;background:#5f5f5f"></em></u></div>
<div class="c" style="left:125px;top:447px"><i>278</i><s class="v" style="color:#3a4256">0</s><u><em style="width:0px;background:#5f5f5f"></em></u></div>
<div class="c" style="left:154px;top:447px"><i>279</i><s class="v" style="color:#3a4256">0</s><u><em style="width:0px;background:#5f5f5f"></em></u></div>
<div class="c" style="left:183px;top:447px"><i>280</i><s class="v" style="color:#3a4256">0</s><u><em style="width:0px;background:#5f5f5f"></em></u></div>
<div class="c" style="left:212px;top:447px"><i>281</i><s class="v" style="color:#3a4256">0</s><u><em style="width:0px;background:#5f5f5f"></em></u></div>
<div class="c" style="left:241px;top:447px"><i>282</i><s class="v" style="color:#3a4256">0</s><u><em style="width:0px;background:#5f5f5f"></em></u></div>
<div class="c" style="left:270px;top:447px"><i>283</i><s class="v" style="color:#3a4256">0</s><u><em style="width:0px;background:#5f5f5f"></em></u></div>
<div class="c" style="left:299px;top:447px"><i>284</i><s class="v" style="color:#3a4256">0</s><u><em style="width:0px;background:#5f5f5f"></em></u></div>
<div class="c" style="left:328px;top:447px"><i>285</i><s class="v" style="color:#3a4256">0</s><u><em style="width:0px;background:#5f5f5f"></em></u></div>
<div class="c" style="left:357px;top:447px"><i>286</i><s class="v" style="color:#3a4256">0</s><u><em style="width:0px;background:#5f5f5f"></em></u></div>
<div class="c" style="left:386px;top:447px"><i>287</i><s class="v" style="color:#3a4256">0</s><u><em style="width:0px;background:#5f5f5f"></em></u></div>
<div class="c" style="left:415px;top:447px"><i>288</i><s class="v" style="color:#3a4256">0</s><u><em style="width:0px;background:#5f5f5f"></em></u></div>
<div class="c" style="left:444px;top:447px"><i>289</i><s class="v" style="color:#3a4256">0</s><u><em style="width:0px;background:#5f5f5f"></em></u></div>
<div class="c" style="left:473px;top:447px"><i>290</i><s class="v" style="color:#3a4256">0</s><u><em style="width:0px;background:#5f5f5f"></em></u></div>
<div class="c" style="left:502px;top:447px"><i>291</i><s class="v" style="color:#3a4256">0</s><u><em style="width:0px;background:#5f5f5f"></em></u></div>
<div class="c" style="left:531px;top:447px"><i>292</i><s class="v" style="color:#3a4256">0</s><u><em style="width:0px;background:#5f5f5f"></em></u></div>
<div class="c" style="left:560px;top:447px"><i>293</i><s class="v" style="color:#3a4256">0</s><u><em style="width:0px;background:#5f5f5f"></em></u></div>
<div class="c" style="left:589px;top:447px"><i>294</i><s class="v" style="color:#3a4256">0</s><u><em style="width:0px;background:#5f5f5f"></em></u></div>
<div class="c" style="left:9px;top:481px"><i>295</i><s class="v" style="color:#3a4256">0</s><u><em style="width:0px;background:#5f5f5f"></em></u></div>
<div class="c" style="left:38px;top:481px"><i>296</i><s class="v" style="color:#3a4256">0</s><u><em style="width:0px;background:#5f5f5f"></em></u></div>
<div class="c" style="left:67px;top:481px"><i>297</i><s class="v" style="color:#3a4256">0</s><u><em style="width:0px;background:#5f5f5f"></em></u></div>
<div class="c" style="left:96px;top:481px"><i>298</i><s class="v" style="color:#3a4256">0</s><u><em style="width:0px;background:#5f5f5f"></em></u></div>
<div class="c" style="left:125px;top:481px"><i>299</i><s class="v" style="color:#3a4256">0</s><u><em style="width:0px;background:#5f5f5f"></em></u></div>
<div class="c" style="left:154px;top:481px"><i>300</i><s class="v" style="color:#3a4256">0</s><u><em style="width:0px;background:#5f5f5f"></em></u></div>
<div class="c" style="left:183px;top:481px"><i>301</i><s class="v" style="color:#3a4256">0</s><u><em style="width:0px;background:#5f5f5f"></em></u></div>
<div class="c" style="left:212px;top:481px"><i>302</i><s class="v" style="color:#3a4256">0</s><u><em style="width:0px;background:#5f5f5f"></em></u></div>
<div class="c" style="left:241px;top:481px"><i>303</i><s class="v" style="color:#3a4256">0</s><u><em style="width:0px;background:#5f5f5f"></em></u></div>
<div class="c" style="left:270px;top:481px"><i>304</i><s class="v" style="color:#3a4256">0</s><u><em style="width:0px;background:#5f5f5f"></em></u></div>
<div class="c" style="left:299px;top:481px"><i>305</i><s class="v" style="color:#3a4256">0</s><u><em style="width:0px;background:#5f5f5f"></em></u></div>
<div class="c" style="left:328px;top:481px"><i>306</i><s class="v" style="color:#3a4256">0</s><u><em style="width:0px;background:#5f5f5f"></em></u></div>
<div class="c" style="left:357px;top:481px"><i>307</i><s class="v" style="color:#3a4256">0</s><u><em style="width:0px;background:#5f5f5f"></em></u></div>
<div class="c" style="left:386px;top:481px"><i>308</i><s class="v" style="color:#3a4256">0</s><u><em style="width:0px;background:#5f5f5f"></em></u></div>
<div class="c" style="left:415px;top:481px"><i>309</i><s class="v" style="color:#3a4256">0</s><u><em style="width:0px;background:#5f5f5f"></em></u></div>
<div class="c" style="left:444px;top:481px"><i>310</i><s class="v" style="color:#3a4256">0</s><u><em style="width:0px;background:#5f5f5f"></em></u></div>
<div class="c" style="left:473px;top:481px"><i>311</i><s class="v" style="color:#3a4256">0</s><u><em style="width:0px;background:#5f5f5f"></em></u></div>
<div class="c" style="left:502px;top:481px"><i>312</i><s class="v" style="color:#3a4256">0</s><u><em style="width:0px;background:#5f5f5f"></em></u></div>
<div class="c" style="left:531px;top:481px;background:#444444"><i>313</i><s class="v b" style="color:#f5f5f5">255</s><u><em style="width:14px;background:#e1e1e1"></em></u></div>
<div class="c" style="left:560px;top:481px"><i>314</i><s class="v" style="color:#3a4256">0</s><u><em style="width:0px;background:#5f5f5f"></em></u></div>
<div class="c" style="left:589px;top:481px"><i>315</i><s class="v" style="color:#3a4256">0</s><u><em style="width:0px;background:#5f5f5f"></em></u></div>
  </div>
  <div class="sbt"></div><div class="sbth"></div>
 </div>
 <div class="foot"><span>© 2026 Miracle Products Inc.</span></div>
</div>
<div class="frame"></div><div class="fl" style="left:0"></div><div class="fl" style="left:901px"></div>
</body></html>
